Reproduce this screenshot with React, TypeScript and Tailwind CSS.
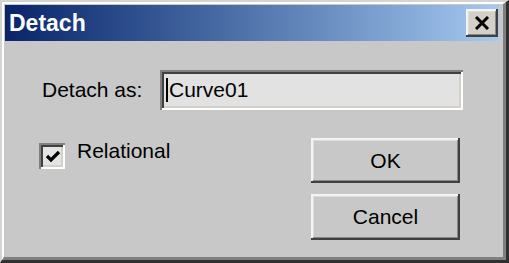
import React from 'react';

const raised =
  'shadow-[inset_-2px_-2px_#404040,inset_2px_2px_#f4f4f4,inset_-3px_-3px_#888888,inset_3px_3px_#dcdcdc]';
const sunken =
  'shadow-[inset_2px_2px_#808080,inset_-2px_-2px_#ffffff,inset_4px_4px_#404040,inset_-4px_-4px_#d4d0c8]';

const DialogButton: React.FC<{ label: string; className?: string }> = ({ label, className }) => (
  <button
    className={`w-[149px] flex items-center justify-center bg-[#c8c8c8] text-[21px] text-black ${raised} ${className ?? ''}`}
  >
    {label}
  </button>
);

const App: React.FC = () => {
  return (
    <div className="w-[509px] h-[263px] border-t-2 border-l-2 border-r-[3px] border-b-[3px] border-t-[#d4d4d4] border-l-[#d4d4d4] border-r-[#303030] border-b-[#303030] font-['Liberation_Sans',Arial,sans-serif]">
      <div className="w-full h-full border-t-2 border-l-2 border-r-[3px] border-b-[3px] border-t-white border-l-white border-r-[#808080] border-b-[#808080] bg-[#c8c8c8] pt-[1px] pl-[1px] pr-[4px] flex flex-col">
        {/* title bar */}
        <div className="h-[36px] flex items-center justify-between bg-gradient-to-r from-[#0a246a] to-[#a6caf0] pl-[4px] pr-[1px]">
          <span className="text-white font-bold text-[23px] leading-none">Detach</span>
          <button
            className={`w-[32px] h-[28px] bg-[#d4d0c8] flex items-center justify-center ${raised}`}
          >
            <svg width="16" height="14" viewBox="0 0 16 14">
              <path d="M2 1 L14 13 M14 1 L2 13" stroke="#000" strokeWidth="3" />
            </svg>
          </button>
        </div>

        {/* body */}
        <div className="flex flex-col text-[21px] text-black">
          <div className="flex items-center mt-[29px] pl-[37px]">
            <span className="w-[118px]">Detach as:</span>
            <div className={`w-[303px] h-[40px] bg-[#e2e2e2] flex items-center pl-[6px] ${sunken}`}>
              <span className="w-[2px] h-[24px] bg-black mr-[1px]" />
              <span>Curve01</span>
            </div>
          </div>

          <div className="flex justify-between mt-[28px] pl-[34px] pr-[39px]">
            <div className="flex items-start mt-[1px]">
              <div className={`w-[26px] h-[26px] bg-[#e4e4e4] mt-[4px] flex items-center justify-center ${sunken}`}>
                <svg width="16" height="14" viewBox="0 0 16 14" className="mt-[2px] ml-[1px]">
                  <path d="M2 6 L6 10 L14 2" stroke="#000" strokeWidth="3.2" fill="none" />
                </svg>
              </div>
              <span className="ml-[12px] leading-[24px]">Relational</span>
            </div>
            <div className="flex flex-col gap-[11px]">
              <DialogButton label="OK" className="h-[45px]" />
              <DialogButton label="Cancel" className="h-[46px]" />
            </div>
          </div>
        </div>
      </div>
    </div>
  );
};

export default App;
